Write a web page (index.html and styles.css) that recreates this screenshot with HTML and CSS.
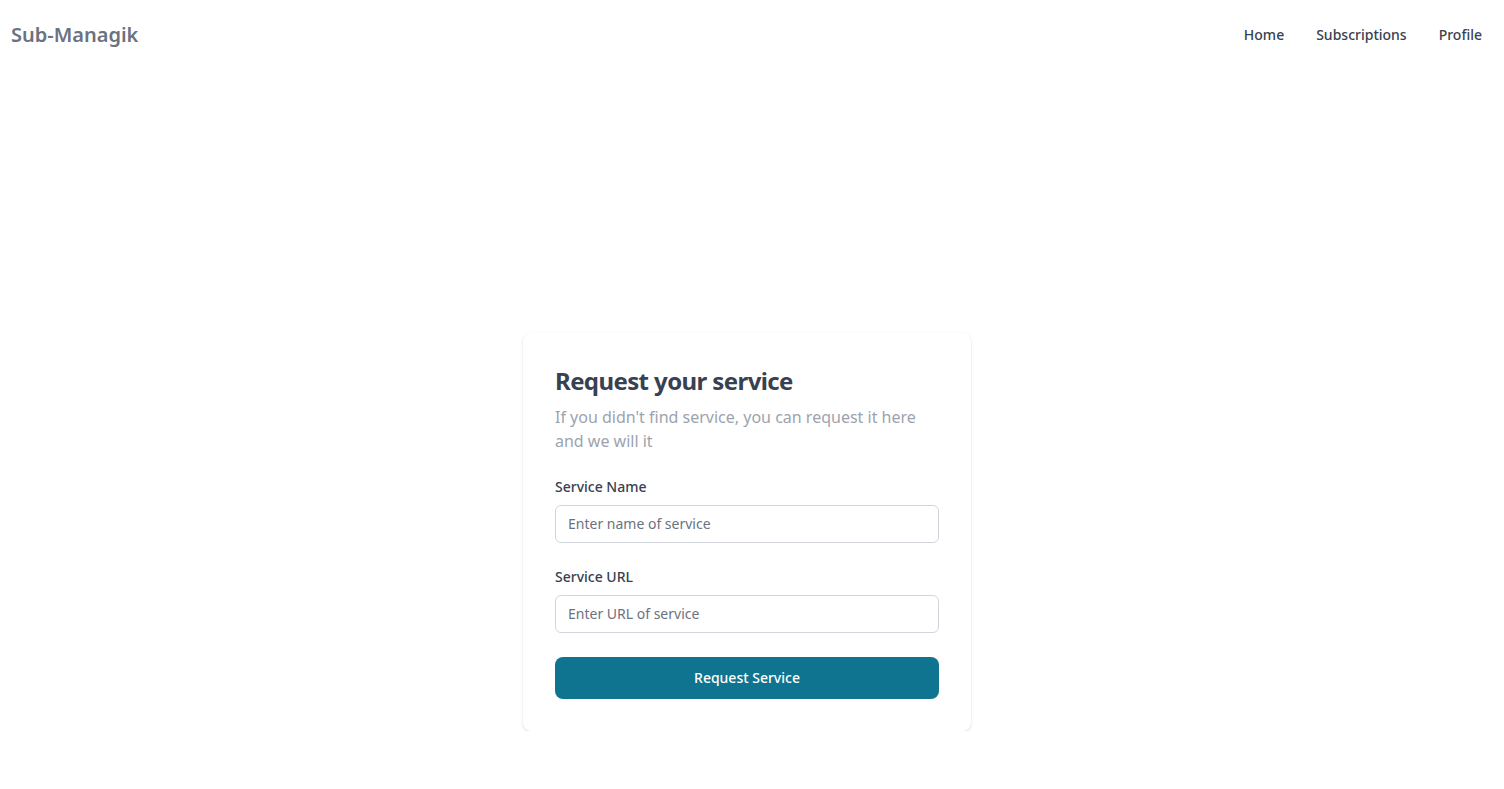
FILE: index.html
```html
<!DOCTYPE html>
<html lang="en">
<head>
<meta charset="utf-8">
<title>Sub-Managik</title>
<link rel="stylesheet" href="styles.css">
</head>
<body>
<header class="topbar">
  <a class="logo" href="#">Sub-Managik</a>
  <nav class="nav">
    <a href="#">Home</a>
    <a href="#">Subscriptions</a>
    <a href="#">Profile</a>
  </nav>
</header>
<main class="main">
  <section class="card">
    <h1 class="title">Request your service</h1>
    <p class="subtitle">If you didn't find service, you can request it here and we will it</p>
    <form class="form">
      <label class="field">
        <span class="label">Service Name</span>
        <input class="input" type="text" placeholder="Enter name of service">
      </label>
      <label class="field">
        <span class="label">Service URL</span>
        <input class="input" type="text" placeholder="Enter URL of service">
      </label>
      <button class="btn" type="button">Request Service</button>
    </form>
  </section>
</main>
</body>
</html>
```
FILE: styles.css
```css
* { box-sizing: border-box; }
html, body { margin: 0; padding: 0; }
body {
  font-family: "Noto Sans", "Open Sans", sans-serif;
  background: #ffffff;
  color: #374151;
}
a { text-decoration: none; }
.topbar {
  height: 70px;
  display: flex;
  align-items: center;
  justify-content: space-between;
  padding: 0 22px 0 11px;
}
.logo {
  font-size: 20px;
  font-weight: 600;
  color: #6b7280;
  line-height: 28px;
}
.nav {
  display: flex;
  gap: 32px;
}
.nav a {
  font-size: 14px;
  font-weight: 500;
  color: #374151;
  line-height: 20px;
}
.main {
  display: flex;
  justify-content: center;
  padding: 263px 10px 0 0;
}
.card {
  width: 448px;
  padding: 32px;
  background: #fff;
  border-radius: 8px;
  box-shadow: 0 1px 3px rgba(0,0,0,0.1), 0 1px 2px rgba(0,0,0,0.06);
}
.title {
  margin: 0;
  font-size: 24px;
  line-height: 32px;
  font-weight: 700;
  letter-spacing: -0.025em;
  color: #374151;
}
.subtitle {
  margin: 8px 0 0;
  font-size: 16px;
  line-height: 24px;
  color: #9ca3af;
}
.form {
  display: flex;
  flex-direction: column;
  gap: 24px;
  margin-top: 24px;
}
.field {
  display: flex;
  flex-direction: column;
  gap: 8px;
}
.label {
  font-size: 14px;
  line-height: 20px;
  font-weight: 500;
  color: #374151;
}
.input {
  height: 38px;
  width: 100%;
  border: 1px solid #d1d5db;
  border-radius: 6px;
  padding: 0 12px 1px;
  font-family: inherit;
  font-size: 14px;
  color: #374151;
  background: #fff;
  outline: none;
}
.input::placeholder { color: #6b7280; }
.btn {
  height: 42px;
  width: 100%;
  border: none;
  border-radius: 8px;
  background: #0e7490;
  color: #fff;
  font-family: inherit;
  font-size: 14px;
  font-weight: 500;
  padding: 0 0 1px;
  cursor: pointer;
}
```
